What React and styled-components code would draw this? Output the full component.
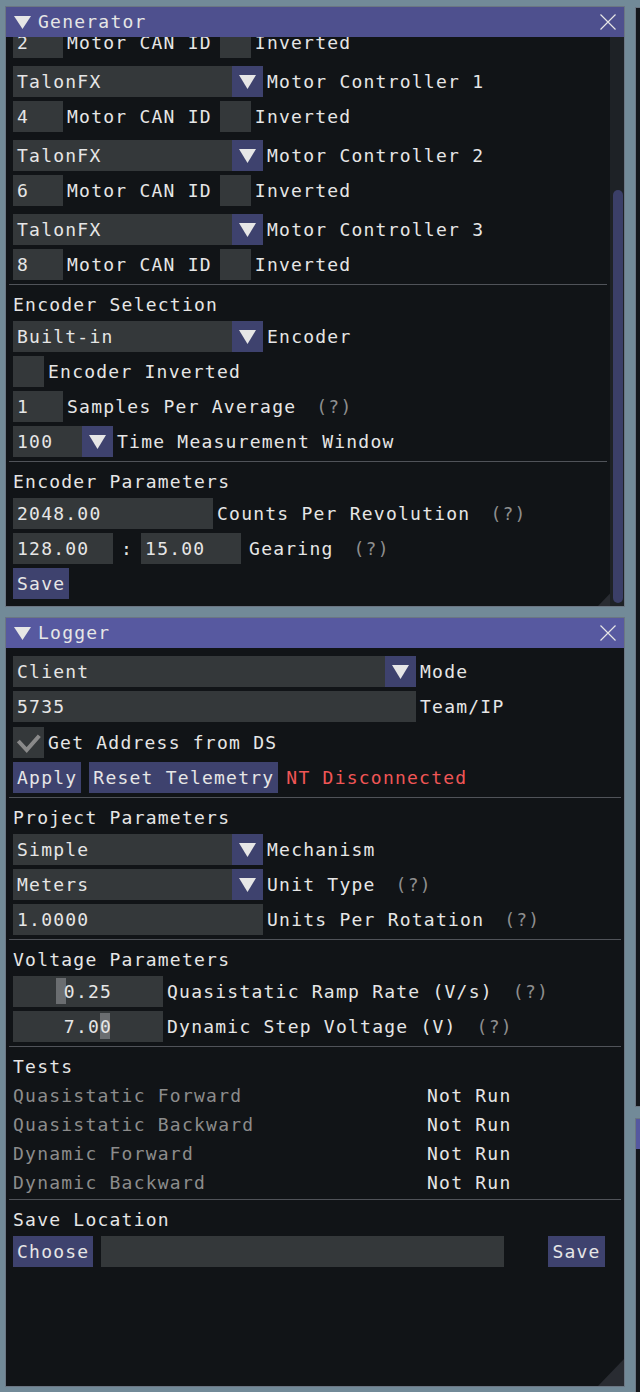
import React from "react";
import styled, { createGlobalStyle } from "styled-components";

const GlobalStyle = createGlobalStyle`
  html, body {
    margin: 0;
    padding: 0;
  }
  body {
    background: #728a98;
    font-family: "DejaVu Sans Mono", "Liberation Mono", monospace;
    font-size: 18px;
    letter-spacing: 1.23px;
    color: #e6e6e6;
  }
`;

const Desktop = styled.div`
  position: relative;
  width: 640px;
  height: 1392px;
  overflow: hidden;
  background: #728a98;
`;

/* windows sit on a free desktop, so they are placed by coordinates */
const Window = styled.section`
  position: absolute;
  left: ${(p) => p.$x}px;
  top: ${(p) => p.$y}px;
  width: ${(p) => p.$w}px;
  height: ${(p) => p.$h}px;
  box-sizing: border-box;
  border: 1px solid #6b7683;
  background: #111417;
  display: flex;
  flex-direction: column;
  overflow: hidden;
`;

const TitleBar = styled.header`
  flex: none;
  height: 30px;
  display: flex;
  align-items: center;
  gap: 7px;
  padding: 0 8px;
  background: ${(p) => (p.$active ? "#5759a0" : "#4e508e")};
  line-height: 30px;
  white-space: pre;
`;

const CloseButton = styled.span`
  margin-left: auto;
  display: flex;
`;

const Body = styled.div`
  flex: 1;
  min-height: 0;
  display: flex;
  position: relative;
  z-index: 1;
`;

const Scroller = styled.div`
  flex: 1;
  min-width: 0;
  overflow: hidden;
`;

const Content = styled.div`
  display: flex;
  flex-direction: column;
  gap: 4px;
  padding: 8px 7px 7px 7px;
`;

const ScrollTrack = styled.div`
  flex: none;
  width: 14px;
  box-sizing: border-box;
  padding: 0 1px 3px 3px;
  background: #1e2226;
  display: flex;
  flex-direction: column;
`;

const ScrollGrab = styled.div`
  margin-top: auto;
  height: ${(p) => p.$h}px;
  border-radius: 5px;
  background: #3b3f68;
`;

const ResizeGrip = styled.div`
  position: absolute;
  right: 0;
  bottom: 0;
  width: 26px;
  height: 27px;
  background: #292c32;
  clip-path: polygon(100% 0, 100% 100%, 0 100%);
`;

const Row = styled.div`
  flex: none;
  display: flex;
  align-items: center;
  height: 31px;
  margin-top: ${(p) => p.$gap || 0}px;
  white-space: pre;
`;

const TextLine = styled.div`
  flex: none;
  height: 25px;
  line-height: 25px;
  white-space: pre;
  color: ${(p) => (p.$dim ? "#8c8c8c" : "#e6e6e6")};
`;

const TestRow = styled.div`
  flex: none;
  display: grid;
  grid-template-columns: 414px 1fr;
  height: 25px;
  line-height: 25px;
  white-space: pre;
`;

const TestName = styled.span`
  color: #8c8c8c;
`;

const Separator = styled.hr`
  flex: none;
  border: 0;
  height: 1px;
  margin: 0 -4px 3px;
  background: #505359;
`;

const Frame = styled.div`
  flex: none;
  box-sizing: border-box;
  width: ${(p) => p.$w}px;
  height: 31px;
  padding: 0 4px;
  background: #34383a;
  line-height: 31px;
  overflow: hidden;
`;

const ComboFrame = styled.div`
  flex: none;
  display: flex;
  width: ${(p) => p.$w}px;
  height: 31px;
  background: #34383a;
`;

const ComboValue = styled.span`
  flex: 1;
  padding-left: 4px;
  line-height: 31px;
`;

const ComboButton = styled.span`
  flex: none;
  width: 31px;
  display: flex;
  align-items: center;
  justify-content: center;
  background: #3e426e;
`;

const CheckFrame = styled.div`
  flex: none;
  width: 31px;
  height: 31px;
  background: #34383a;
  display: flex;
`;

const Button = styled.div`
  flex: none;
  height: 31px;
  padding: 0 4px;
  margin-left: ${(p) => p.$gap || 0}px;
  background: #3e426e;
  line-height: 31px;
`;

const SliderFrame = styled.div`
  flex: none;
  position: relative;
  width: ${(p) => p.$w}px;
  height: 31px;
  background: #34383a;
  line-height: 31px;
  text-align: center;
`;

const SliderGrab = styled.span`
  position: absolute;
  top: 2px;
  width: 10px;
  height: 26px;
  background: #6a6d70;
`;

const SliderText = styled.span`
  position: relative;
`;

const Label = styled.span`
  margin-left: ${(p) => (p.$gap === undefined ? 4 : p.$gap)}px;
  color: ${(p) => p.$color || "#e6e6e6"};
`;

const Help = styled.span`
  margin-left: 20px;
  color: #8e8e8e;
`;

const Spacer = styled.span`
  flex: none;
  width: ${(p) => p.$w}px;
`;

const BackWindow = styled.div`
  position: absolute;
  left: 635px;
  top: ${(p) => p.$y}px;
  width: 40px;
  height: ${(p) => p.$h}px;
  box-sizing: border-box;
  border: 1px solid #6b7683;
  background: #14171b;
`;

const BackTitle = styled.div`
  height: 30px;
  background: #5558a0;
`;

const Triangle = ({ w = 17, h = 13 }) => (
  <svg width={w} height={h} viewBox={`0 0 ${w} ${h}`}>
    <polygon points={`0,0 ${w},0 ${w / 2},${h}`} fill="#e6e6e6" />
  </svg>
);

const CloseIcon = () => (
  <svg width="16" height="16" viewBox="0 0 16 16">
    <path d="M0.5 0.5 L15.5 15.5 M15.5 0.5 L0.5 15.5" stroke="#e6e6e6" strokeWidth="1.2" fill="none" />
  </svg>
);

const CheckMark = () => (
  <svg width="31" height="31" viewBox="0 0 31 31">
    <polyline points="5.3,14 13.7,23 26.3,8.7" fill="none" stroke="#8a8a8a" strokeWidth="4" />
  </svg>
);

const Combo = ({ value, width }) => (
  <ComboFrame $w={width}>
    <ComboValue>{value}</ComboValue>
    <ComboButton>
      <Triangle w={17} h={14} />
    </ComboButton>
  </ComboFrame>
);

const CheckBox = ({ checked }) => <CheckFrame>{checked && <CheckMark />}</CheckFrame>;

const Slider = ({ value, frac, width = 150 }) => (
  <SliderFrame $w={width}>
    <SliderGrab style={{ left: 2 + frac * (width - 14) }} />
    <SliderText>{value}</SliderText>
  </SliderFrame>
);

const Title = ({ text, active }) => (
  <TitleBar $active={active}>
    <Triangle />
    <span>{text}</span>
    <CloseButton>
      <CloseIcon />
    </CloseButton>
  </TitleBar>
);

const scrollToBottom = (el) => {
  if (el) el.scrollTop = el.scrollHeight;
};

const MotorRow = ({ id }) => (
  <Row>
    <Frame $w={50}>{id}</Frame>
    <Label>Motor CAN ID</Label>
    <Spacer $w={8} />
    <CheckBox />
    <Label>Inverted</Label>
  </Row>
);

const MotorCombo = ({ index }) => (
  <Row $gap={4}>
    <Combo value="TalonFX" width={250} />
    <Label>Motor Controller {index}</Label>
  </Row>
);

const GeneratorWindow = () => (
  <Window $x={5} $y={6} $w={620} $h={601}>
    <Title text="Generator" />
    <Body>
      <Scroller ref={scrollToBottom}>
        <Content>
          <TextLine>Motor / Motor Controller Selection</TextLine>
          <Row>
            <Combo value="TalonFX" width={250} />
            <Label>Motor Controller 0</Label>
          </Row>
          <MotorRow id="2" />
          <MotorCombo index={1} />
          <MotorRow id="4" />
          <MotorCombo index={2} />
          <MotorRow id="6" />
          <MotorCombo index={3} />
          <MotorRow id="8" />
          <Separator />
          <TextLine>Encoder Selection</TextLine>
          <Row>
            <Combo value="Built-in" width={250} />
            <Label>Encoder</Label>
          </Row>
          <Row>
            <CheckBox />
            <Label>Encoder Inverted</Label>
          </Row>
          <Row>
            <Frame $w={50}>1</Frame>
            <Label>Samples Per Average</Label>
            <Help>(?)</Help>
          </Row>
          <Row>
            <Combo value="100" width={100} />
            <Label>Time Measurement Window</Label>
          </Row>
          <Separator />
          <TextLine>Encoder Parameters</TextLine>
          <Row>
            <Frame $w={200}>2048.00</Frame>
            <Label>Counts Per Revolution</Label>
            <Help>(?)</Help>
          </Row>
          <Row>
            <Frame $w={100}>128.00</Frame>
            <Label $gap={8}>:</Label>
            <Spacer $w={8} />
            <Frame $w={100}>15.00</Frame>
            <Label $gap={8}>Gearing</Label>
            <Help>(?)</Help>
          </Row>
          <Row>
            <Button>Save</Button>
          </Row>
        </Content>
      </Scroller>
      <ScrollTrack>
        <ScrollGrab $h={413} />
      </ScrollTrack>
    </Body>
    <ResizeGrip />
  </Window>
);

const tests = ["Quasistatic Forward", "Quasistatic Backward", "Dynamic Forward", "Dynamic Backward"];

const LoggerWindow = () => (
  <Window $x={5} $y={617} $w={620} $h={770}>
    <Title text="Logger" active />
    <Body>
      <Scroller>
        <Content>
          <Row>
            <Combo value="Client" width={403} />
            <Label>Mode</Label>
          </Row>
          <Row>
            <Frame $w={403}>5735</Frame>
            <Label>Team/IP</Label>
          </Row>
          <Row $gap={1}>
            <CheckBox checked />
            <Label>Get Address from DS</Label>
          </Row>
          <Row>
            <Button>Apply</Button>
            <Button $gap={8}>Reset Telemetry</Button>
            <Label $gap={8} $color="#f05656">
              NT Disconnected
            </Label>
          </Row>
          <Separator />
          <TextLine>Project Parameters</TextLine>
          <Row>
            <Combo value="Simple" width={250} />
            <Label>Mechanism</Label>
          </Row>
          <Row>
            <Combo value="Meters" width={250} />
            <Label>Unit Type</Label>
            <Help>(?)</Help>
          </Row>
          <Row>
            <Frame $w={250}>1.0000</Frame>
            <Label>Units Per Rotation</Label>
            <Help>(?)</Help>
          </Row>
          <Separator />
          <TextLine>Voltage Parameters</TextLine>
          <Row>
            <Slider value="0.25" frac={0.3} />
            <Label>Quasistatic Ramp Rate (V/s)</Label>
            <Help>(?)</Help>
          </Row>
          <Row>
            <Slider value="7.00" frac={0.625} />
            <Label>Dynamic Step Voltage (V)</Label>
            <Help>(?)</Help>
          </Row>
          <Separator />
          <TextLine>Tests</TextLine>
          {tests.map((t) => (
            <TestRow key={t}>
              <TestName>{t}</TestName>
              <span>Not Run</span>
            </TestRow>
          ))}
          <Separator />
          <TextLine>Save Location</TextLine>
          <Row>
            <Button>Choose</Button>
            <Spacer $w={8} />
            <Frame $w={403} />
            <Button $gap={44}>Save</Button>
          </Row>
        </Content>
      </Scroller>
    </Body>
    <ResizeGrip />
  </Window>
);

export default function App() {
  return (
    <>
      <GlobalStyle />
      <Desktop>
        <BackWindow $y={7} $h={1100} />
        <BackWindow $y={1118} $h={300}>
          <BackTitle />
        </BackWindow>
        <GeneratorWindow />
        <LoggerWindow />
      </Desktop>
    </>
  );
}
